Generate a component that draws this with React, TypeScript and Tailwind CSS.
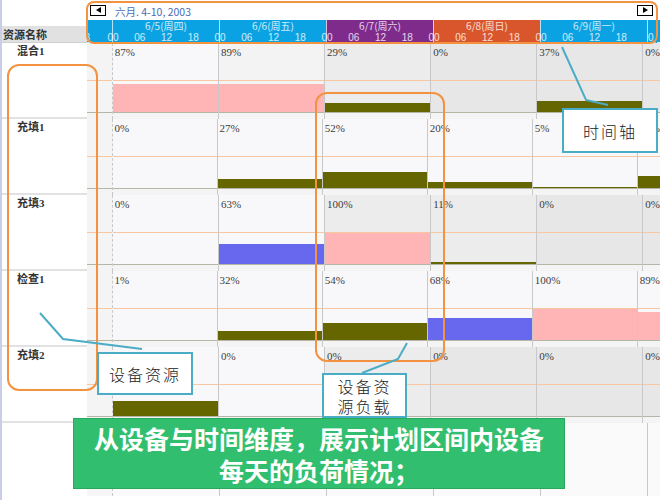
import React from 'react';

type BarKind = 'olive' | 'blue' | 'pink';

interface Cell {
  pct: string;
  bg: string;
  bar?: BarKind;
  h?: number;
}

interface Resource {
  name: string;
  cells: Cell[];
}

const LIGHT = 'bg-[#f8f8fa]';
const LIGHT2 = 'bg-[#f3f3f4]';
const GRAY = 'bg-[#ececec]';
const GRAY2 = 'bg-[#e7e7e7]';

const barColor: Record<BarKind, string> = {
  olive: 'bg-[#666600]',
  blue: 'bg-[#6868ee]',
  pink: 'bg-[#ffb5b5]',
};

const days = [
  { label: '6/5(周四)', color: 'bg-[#0aa2e2]' },
  { label: '6/6(周五)', color: 'bg-[#0aa2e2]' },
  { label: '6/7(周六)', color: 'bg-[#7e2b8c]' },
  { label: '6/8(周日)', color: 'bg-[#d9552b]' },
  { label: '6/9(周一)', color: 'bg-[#0aa2e2]' },
];

// last entry of each row is the clipped column after 6/9
const resources: Resource[] = [
  {
    name: '混合1',
    cells: [
      { pct: '87%', bg: LIGHT, bar: 'pink', h: 28 },
      { pct: '89%', bg: LIGHT2, bar: 'pink', h: 28 },
      { pct: '29%', bg: GRAY, bar: 'olive', h: 9 },
      { pct: '0%', bg: GRAY2 },
      { pct: '37%', bg: GRAY2, bar: 'olive', h: 11 },
      { pct: '0%', bg: GRAY2 },
    ],
  },
  {
    name: '充填1',
    cells: [
      { pct: '0%', bg: LIGHT },
      { pct: '27%', bg: LIGHT, bar: 'olive', h: 9 },
      { pct: '52%', bg: LIGHT, bar: 'olive', h: 16 },
      { pct: '20%', bg: LIGHT, bar: 'olive', h: 6 },
      { pct: '5%', bg: LIGHT, bar: 'olive', h: 1 },
      { pct: '38%', bg: LIGHT, bar: 'olive', h: 12 },
    ],
  },
  {
    name: '充填3',
    cells: [
      { pct: '0%', bg: LIGHT },
      { pct: '63%', bg: LIGHT, bar: 'blue', h: 20 },
      { pct: '100%', bg: GRAY, bar: 'pink', h: 31 },
      { pct: '11%', bg: GRAY, bar: 'olive', h: 2 },
      { pct: '0%', bg: GRAY2 },
      { pct: '0%', bg: GRAY2 },
    ],
  },
  {
    name: '检查1',
    cells: [
      { pct: '1%', bg: LIGHT },
      { pct: '32%', bg: LIGHT, bar: 'olive', h: 9 },
      { pct: '54%', bg: LIGHT, bar: 'olive', h: 17 },
      { pct: '68%', bg: LIGHT, bar: 'blue', h: 22 },
      { pct: '100%', bg: LIGHT, bar: 'pink', h: 31 },
      { pct: '89%', bg: LIGHT, bar: 'pink', h: 28 },
    ],
  },
  {
    name: '充填2',
    cells: [
      { pct: '48%', bg: LIGHT, bar: 'olive', h: 15 },
      { pct: '0%', bg: LIGHT },
      { pct: '0%', bg: GRAY },
      { pct: '0%', bg: GRAY2 },
      { pct: '0%', bg: GRAY2 },
      { pct: '0%', bg: GRAY2 },
    ],
  },
];

const HourTicks: React.FC<{ labels: string[] }> = ({ labels }) => (
  <div className="flex h-full w-[107px]">
    {labels.map((l, i) => (
      <div key={i} className="relative flex-1">
        <span className="absolute left-0 top-0 -translate-x-1/2 leading-[11px]">{l}</span>
      </div>
    ))}
  </div>
);

const LoadCell: React.FC<{ cell?: Cell }> = ({ cell }) => (
  <>
    <div className="h-[37px] pl-[2px] pt-[3px] font-['Liberation_Serif',serif] text-[11px] leading-[13px] text-[#3c3c3c]">
      {cell?.pct}
    </div>
    <div className="h-px bg-[#f9c6a2]" />
    <div className="flex h-[31px] items-end">
      {cell?.bar && <div className={`w-full ${barColor[cell.bar]}`} style={{ height: cell.h }} />}
    </div>
    <div className="h-px bg-[#b6b6a6]" />
    <div className="h-[6px] bg-[#f4f4f4]" />
  </>
);

const NavButton: React.FC<{ dir: 'left' | 'right' }> = ({ dir }) => (
  <div className="flex h-[11px] w-[16px] items-center justify-center border-[1.5px] border-black bg-white">
    <svg width="5" height="6" viewBox="0 0 5 6">
      {dir === 'left' ? <path d="M5 0 L0 3 L5 6 Z" fill="#000" /> : <path d="M0 0 L5 3 L0 6 Z" fill="#000" />}
    </svg>
  </div>
);

const Callout: React.FC<{ className: string; children: React.ReactNode }> = ({ className, children }) => (
  <div
    className={`absolute flex flex-col items-center justify-center border-2 border-[#4bacc6] bg-white font-['Noto_Sans_CJK_SC',serif] text-[16px] font-light leading-[20px] tracking-[2px] text-[#222] ${className}`}
  >
    {children}
  </div>
);

const App: React.FC = () => {
  return (
    <div className="relative flex h-[500px] w-[660px] overflow-hidden bg-white font-['Noto_Sans_CJK_SC',sans-serif]">
      {/* Resource names */}
      <div className="flex w-[87px] flex-col border-l-2 border-[#c9cde8] bg-white">
        <div className="h-[26px]" />
        <div className="h-[17px] border-b border-[#cfcfcf] bg-[#e1e1e1] pl-[1px] text-[11px] font-semibold leading-[16px] text-[#333]">
          资源名称
        </div>
        {resources.map((r) => (
          <div
            key={r.name}
            className="h-[76px] border-b-2 border-[#e2e2e2] pl-[15px] pt-[1px] font-['Liberation_Serif','Noto_Sans_CJK_SC',serif] text-[11px] font-semibold leading-[14px] text-[#333]"
          >
            {r.name}
          </div>
        ))}
      </div>

      {/* Timeline */}
      <div className="flex w-[573px] flex-col overflow-hidden">
        {/* Header */}
        <div className="flex h-[20px] items-center">
          <div className="ml-[3px]">
            <NavButton dir="left" />
          </div>
          <span className="ml-[9px] mt-[3px] text-[10.5px] leading-[12px] text-[#4a6cb5]">六月. 4-10, 2003</span>
          <div className="ml-auto mr-[7px]">
            <NavButton dir="right" />
          </div>
        </div>
        <div className="flex h-[23px] font-['Liberation_Sans',sans-serif] text-[10px] text-white/80">
          <div className="flex w-[25px] flex-col bg-[#0aa2e2]">
            <div className="h-[12px]" />
            <div className="relative h-[11px] border-b border-dashed border-white/80">
              <span className="absolute left-[-8px] top-0 leading-[11px]">18</span>
            </div>
          </div>
          {days.map((d) => (
            <div key={d.label} className={`flex w-[107px] flex-col border-l border-white/70 ${d.color}`}>
              <div className="h-[12px] text-center font-['Noto_Sans_CJK_SC',sans-serif] text-[10px] leading-[12px]">
                {d.label}
              </div>
              <div className="h-[11px] border-b border-dashed border-white/80">
                <HourTicks labels={['00', '06', '12', '18']} />
              </div>
            </div>
          ))}
          <div className="flex flex-1 flex-col overflow-hidden border-l border-white/70 bg-[#0aa2e2]">
            <div className="h-[12px]" />
            <div className="h-[11px] border-b border-dashed border-white/80">
              <HourTicks labels={['00', '06', '12', '18']} />
            </div>
          </div>
        </div>

        {/* Rows */}
        {resources.map((r) => (
          <div key={r.name} className="flex h-[76px]">
            <div className="flex w-[25px] flex-col bg-[#f4f4f4]">
              <LoadCell />
            </div>
            {r.cells.slice(0, 5).map((c, i) => (
              <div
                key={i}
                className={`flex w-[107px] flex-col border-l border-[#c8c8c8] ${c.bg} ${i === 0 ? 'border-dashed' : ''}`}
              >
                <LoadCell cell={c} />
              </div>
            ))}
            <div className={`flex flex-1 flex-col border-l border-[#c8c8c8] ${r.cells[5].bg}`}>
              <LoadCell cell={r.cells[5]} />
            </div>
          </div>
        ))}

        {/* Empty area */}
        <div className="flex h-[73px]">
          <div className="w-[25px] bg-[#f6f6f6]" />
          {days.map((d, i) => (
            <div
              key={d.label}
              className={`w-[107px] border-l border-[#c8c8c8] bg-[#fafafa] ${i === 0 ? 'border-dashed' : ''}`}
            />
          ))}
          <div className="flex-1 border-l border-[#c8c8c8] bg-[#fafafa]" />
        </div>
      </div>

      {/* Annotations */}
      <div className="absolute left-[86px] top-[1px] h-[43px] w-[572px] rounded-[8px] border-[2.5px] border-[#f39241]" />
      <div className="absolute left-[7px] top-[64px] h-[327px] w-[91px] rounded-[12px] border-[2.5px] border-[#f39241]" />
      <div className="absolute left-[315px] top-[92px] h-[270px] w-[130px] rounded-[12px] border-[2.5px] border-[#f39241]" />

      <svg className="pointer-events-none absolute left-0 top-0" width="660" height="500">
        <polyline points="562,47 586,100 608,105" fill="none" stroke="#4bacc6" strokeWidth="2" />
        <polyline points="40,313 63,339 142,349" fill="none" stroke="#4bacc6" strokeWidth="2" />
        <polyline points="407,343 398,359 362,373" fill="none" stroke="#4bacc6" strokeWidth="2" />
      </svg>

      <Callout className="left-[562px] top-[108px] h-[45px] w-[96px]">时间轴</Callout>
      <Callout className="left-[97px] top-[352px] h-[43px] w-[96px]">设备资源</Callout>
      <Callout className="left-[322px] top-[373px] h-[45px] w-[85px]">
        <span>设备资</span>
        <span>源负载</span>
      </Callout>

      <div className="absolute left-[73px] top-[418px] flex h-[71px] w-[492px] flex-col items-center justify-center border border-[#26a95d] bg-[#31bf6f] text-[25px] font-bold leading-[32px] text-white">
        <span>从设备与时间维度，展示计划区间内设备</span>
        <span>每天的负荷情况；</span>
      </div>
    </div>
  );
};

export default App;
